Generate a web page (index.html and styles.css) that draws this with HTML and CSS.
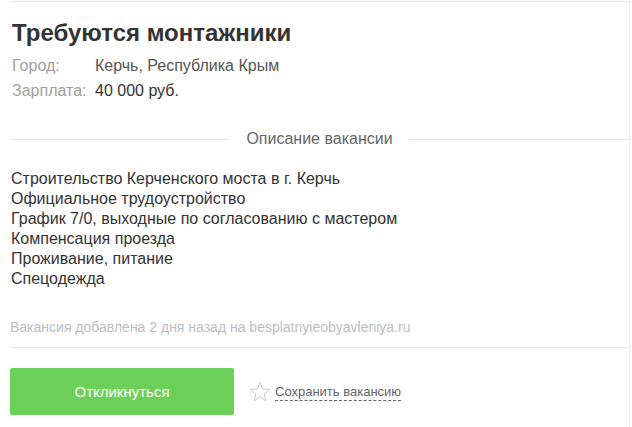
FILE: index.html
```html
<!DOCTYPE html>
<html lang="ru">
<head>
<meta charset="utf-8">
<link rel="stylesheet" href="styles.css">
</head>
<body>
<div class="card">
  <h1 class="title">Требуются монтажники</h1>
  <div class="fields">
    <div class="label">Город:</div><div class="value city">Керчь, Республика Крым</div>
    <div class="label">Зарплата:</div><div class="value">40 000 руб.</div>
  </div>
  <div class="sep"><span class="sep-line"></span><span class="sep-text">Описание вакансии</span><span class="sep-line"></span></div>
  <div class="desc">
    <div>Строительство Керченского моста в г. Керчь</div>
    <div>Официальное трудоустройство</div>
    <div>График 7/0, выходные по согласованию с мастером</div>
    <div>Компенсация проезда</div>
    <div>Проживание, питание</div>
    <div>Спецодежда</div>
  </div>
  <div class="added">Вакансия добавлена 2 дня назад на besplatnyieobyavleniya.ru</div>
  <div class="actions">
    <button class="respond">Откликнуться</button>
    <a class="save">
      <svg class="star" width="22" height="22" viewBox="0 0 22 22"><path d="M11 1.5 L13.6 8.2 L20.6 8.4 L15.1 12.8 L17 19.8 L11 15.8 L5 19.8 L6.9 12.8 L1.4 8.4 L8.4 8.2 Z" fill="none" stroke="#c8c8c8" stroke-width="1"/></svg>
      <span class="save-text">Сохранить вакансию</span>
    </a>
  </div>
</div>
</body>
</html>
```
FILE: styles.css
```css
html, body { margin: 0; padding: 0; background: #fff; }
body { font-family: "Liberation Sans", Arial, sans-serif; }
.card {
  margin-left: 10px;
  width: 620px;
  height: 440px;
  border-top: 1px solid #e6e6e6;
  border-right: 1px solid #ececec;
  margin-top: 1px;
  box-sizing: border-box;
}
.title {
  margin: 0;
  padding: 16px 0 0 2px;
  font-size: 24px;
  line-height: 30px;
  font-weight: bold;
  color: #333;
}
.fields {
  display: grid;
  grid-template-columns: 83px auto;
  padding-left: 2px;
  margin-top: 5px;
  font-size: 16px;
  line-height: 25px;
}
.label { color: #a0a0a0; }
.value { color: #333; }
.value.city { color: #555; }
.sep {
  display: flex;
  align-items: center;
  margin-top: 26px;
  height: 20px;
}
.sep-line { flex: 1; height: 1px; background: #e5e5e5; }
.sep-text { padding: 0 16px; font-size: 16px; color: #666; }
.desc {
  margin-top: 20px;
  padding-left: 1px;
  font-size: 16px;
  line-height: 20px;
  color: #333;
}
.added {
  margin-top: 29px;
  font-size: 14px;
  color: #bdbdbd;
  line-height: 18px;
}
.actions {
  border-top: 1px solid #e8e8e8;
  margin-top: 11px;
  padding-top: 20px;
  display: flex;
  align-items: center;
}
.respond {
  width: 224px;
  height: 47px;
  border: none;
  border-radius: 2px;
  background: #6ccf57;
  color: #fff;
  font-family: "Liberation Sans", Arial, sans-serif;
  font-size: 15px;
  padding: 0;
}
.save {
  display: flex;
  align-items: center;
  margin-left: 15px;
  color: #666;
  font-size: 13px;
}
.star { display: block; margin-right: 4px; }
.save-text {
  border-bottom: 1px dashed #666;
  line-height: 17px;
}
```
